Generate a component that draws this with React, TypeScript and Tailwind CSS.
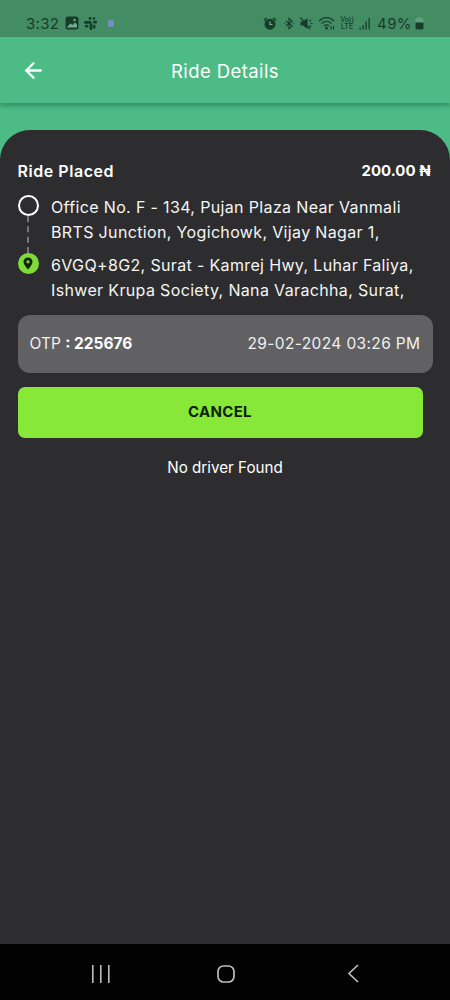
import { ArrowLeft } from "lucide-react";

function Slack() {
  return (
    <svg width="15" height="15" viewBox="0 0 24 24" fill="#173d2a">
      <rect x="9" y="1.5" width="4.5" height="4.5" rx="2.2" /><rect x="1.5" y="8" width="12" height="4.5" rx="2.2" />
      <rect x="10.5" y="11.5" width="4.5" height="11" rx="2.2" /><rect x="16" y="7.5" width="6.5" height="4.5" rx="2.2" />
      <rect x="3" y="14" width="5.5" height="4.5" rx="2.2" /><rect x="16" y="14" width="4" height="6" rx="2" />
      <rect x="15.5" y="2" width="4" height="4" rx="2" />
    </svg>
  );
}

function StatusBar() {
  const c = "#173d2a";
  return (
    <div className="h-[37px] bg-[#438c64] flex items-center justify-between pl-[26px] pr-[26px] pt-[9px] text-[#173d2a] font-['Inter',sans-serif]">
      <div className="flex items-center gap-[4px]">
        <span className="text-[15px] leading-none tracking-[0.3px] mr-[2px]">3:32</span>
        <svg width="14" height="14" viewBox="0 0 14 14">
          <rect x="0.5" y="0.5" width="13" height="13" rx="2.5" fill={c} />
          <path d="M2 11 L5.5 7.5 L7.5 9 L10 6.5 L12 8.5 V11.5 H2 Z" fill="#6fae8c" />
          <circle cx="9.5" cy="4" r="1.2" fill="#6fae8c" />
        </svg>
        <Slack />
        <span className="w-[6px] h-[7px] ml-[6px] rounded-[2px] bg-[#6f8fc8]" />
      </div>
      <div className="flex items-center gap-[3px]">
        <svg width="14" height="13" viewBox="0 0 14 13" fill={c}>
          <circle cx="7" cy="7.2" r="5.5" /><path d="M0.5 3 L3 0.5 L4.5 1.5 L1.5 4 Z M13.5 3 L11 0.5 L9.5 1.5 L12.5 4 Z" />
          <path d="M7 4.5 V7.5 H9.5" stroke="#6fae8c" strokeWidth="1.2" fill="none" />
        </svg>
        <svg className="ml-[3px]" width="12" height="13" viewBox="0 0 13 13" fill="none" stroke={c} strokeWidth="1.2">
          <path d="M3 3.8 L10 9 L6.5 12 V1 L10 4 L3 9.2" /><path d="M1 6.5 h1 M11 6.5 h1" />
        </svg>
        <svg className="ml-[2px]" width="14" height="13" viewBox="0 0 14 13" fill={c}>
          <path d="M0.5 4.5 H3 L7.5 1 V12 L3 8.5 H0.5 Z" /><path d="M0.5 0.5 L10 12" stroke={c} strokeWidth="1.2" />
          <path d="M9.5 3 l1.5 1.5 M10.5 6.5 h2 M9.5 10 l1.5 -1.5" stroke={c} strokeWidth="1.2" />
        </svg>
        <svg className="ml-[1px]" width="19" height="15" viewBox="0 0 19 15" fill="none" stroke={c} strokeWidth="1.1">
          <path d="M1 5 C5.5 0.5 11.5 0.5 16 5" /><path d="M3.5 7.5 C6.5 4.5 10.5 4.5 13.5 7.5" /><path d="M6 10 C7.5 8.5 9.5 8.5 11 10" />
          <circle cx="8.5" cy="12.2" r="0.8" fill={c} /><path d="M13 10 v3.5 M15.5 13.5 v-3.5" />
        </svg>
        <div className="flex flex-col items-center text-[7px] leading-[7px] font-medium w-[14px]">
          <span>Vo))</span><span>LTE</span>
        </div>
        <svg className="ml-[2px]" width="12" height="13" viewBox="0 0 12 13" fill={c}>
          <rect x="0.5" y="10.5" width="1.3" height="2" /><rect x="3.5" y="8" width="1.3" height="4.5" />
          <rect x="6.5" y="4.5" width="1.3" height="8" /><rect x="9.5" y="1" width="1.3" height="11.5" />
        </svg>
        <span className="text-[15px] leading-none ml-[3px] tracking-[0.4px]">49%</span>
        <svg width="9" height="13" viewBox="0 0 9 13">
          <rect x="0.5" y="1" width="8" height="11.5" rx="1.2" fill="#5f9e7c" />
          <rect x="2.8" y="0" width="3.4" height="1.5" fill="#5f9e7c" />
          <path d="M0.5 5.5 H8.5 V11.3 a1.2 1.2 0 0 1 -1.2 1.2 H1.7 a1.2 1.2 0 0 1 -1.2 -1.2 Z" fill={c} />
        </svg>
      </div>
    </div>
  );
}

function Pin() {
  return (
    <div className="w-[21px] h-[21px] rounded-full bg-[#7ddc35] flex items-center justify-center">
      <svg width="10" height="13" viewBox="0 0 10 13">
        <path d="M5 0.5 C2.3 0.5 0.5 2.5 0.5 4.8 C0.5 7.8 5 12.5 5 12.5 C5 12.5 9.5 7.8 9.5 4.8 C9.5 2.5 7.7 0.5 5 0.5 Z" fill="#10240f" />
        <circle cx="5" cy="4.8" r="1.6" fill="#7ddc35" />
      </svg>
    </div>
  );
}

export default function App() {
  return (
    <div className="w-[450px] h-[1000px] flex flex-col bg-[#4dbb85] overflow-hidden font-['Inter','Open_Sans',sans-serif]">
      <StatusBar />
      <header className="h-[66px] flex items-center bg-[#4dbb85] shadow-[0_3px_4px_rgba(30,90,60,0.45)] pl-[21px] relative">
        <ArrowLeft size={25} strokeWidth={2.2} className="text-white" />
        <h1 className="absolute inset-x-0 top-[21px] text-center text-white text-[18.5px] tracking-[0.4px]">Ride Details</h1>
      </header>
      <div className="h-[27px]" />
      <main className="flex-1 bg-[#2d2d2f] rounded-t-[30px] pt-[31px] px-[17.5px]">
        <div className="flex justify-between items-center h-[20px] pr-[2px]">
          <span className="text-white text-[16px] font-semibold tracking-[0.55px]">Ride Placed</span>
          <span className="text-white text-[15px] font-bold">200.00 ₦</span>
        </div>
        <div className="flex mt-[14px]">
          <div className="w-[21px] flex flex-col items-center">
            <div className="w-[21px] h-[21px] rounded-full border-[2.5px] border-white shrink-0" />
            <div className="h-[37px] border-l-[2px] border-dashed border-[#77777a]" />
            <Pin />
          </div>
          <div className="ml-[12.5px] text-[16px] leading-[25px] text-[#f5f5f5] tracking-[0.35px]">
            <p className="whitespace-nowrap">Office No. F - 134, Pujan Plaza Near Vanmali</p>
            <p className="whitespace-nowrap">BRTS Junction, Yogichowk, Vijay Nagar 1,</p>
            <p className="whitespace-nowrap mt-[8px]">6VGQ+8G2, Surat - Kamrej Hwy, Luhar Faliya,</p>
            <p className="whitespace-nowrap">Ishwer Krupa Society, Nana Varachha, Surat,</p>
          </div>
        </div>
        <div className="mt-[12px] h-[58px] w-[415px] rounded-[12px] bg-[#616063] flex items-center justify-between px-[12px] text-white text-[15.5px]">
          <span><span className="text-[#f0f0f0]">OTP</span> <span className="font-bold">: 225676</span></span>
          <span className="text-[#f0f0f0] tracking-[0.37px]">29-02-2024 03:26 PM</span>
        </div>
        <button className="mt-[14px] h-[51px] w-[405px] rounded-[7px] bg-[#88e838] text-[#10200c] text-[15px] font-bold tracking-[0.3px] flex items-center justify-center">
          CANCEL
        </button>
        <p className="mt-[20px] w-[415px] text-center text-white text-[15.2px] leading-[20px]">No driver Found</p>
      </main>
      <nav className="h-[56px] bg-[#020203] flex items-center pl-[92px] pt-[3px]">
        <svg width="18" height="18" viewBox="0 0 18 18" fill="#bdbdbd"><rect x="0" y="0" width="1.6" height="18" /><rect x="8" y="0" width="1.6" height="18" /><rect x="16" y="0" width="1.6" height="18" /></svg>
        <svg className="ml-[107px]" width="18" height="18" viewBox="0 0 18 18" fill="none" stroke="#bdbdbd" strokeWidth="1.7"><rect x="1" y="1" width="16" height="16" rx="5.5" /></svg>
        <svg className="ml-[112px]" width="12" height="19" viewBox="0 0 12 19" fill="none" stroke="#bdbdbd" strokeWidth="1.7"><path d="M11 1 L2 9.5 L11 18" /></svg>
      </nav>
    </div>
  );
}
